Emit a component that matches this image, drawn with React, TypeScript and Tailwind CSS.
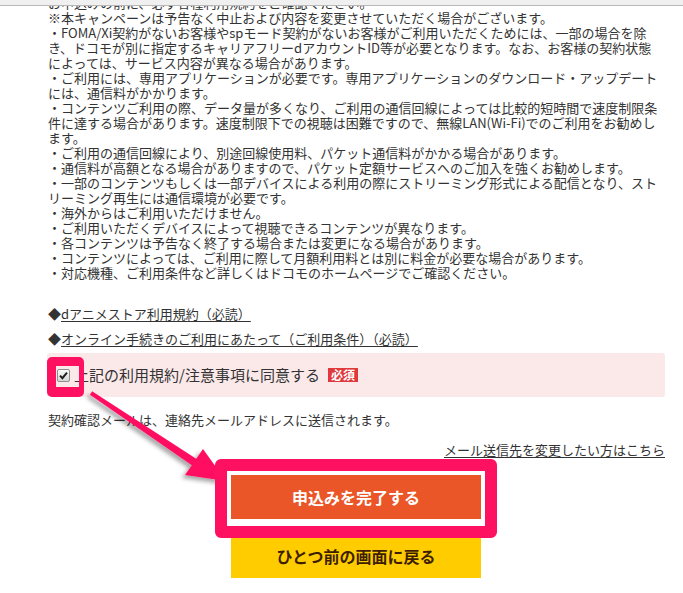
const NOTES = [
  "お申込みの前に、必ず各種利用規約をご確認ください。",
  "※本キャンペーンは予告なく中止および内容を変更させていただく場合がございます。",
  "・FOMA/Xi契約がないお客様やspモード契約がないお客様がご利用いただくためには、一部の場合を除",
  "き、ドコモが別に指定するキャリアフリーdアカウントID等が必要となります。なお、お客様の契約状態",
  "によっては、サービス内容が異なる場合があります。",
  "・ご利用には、専用アプリケーションが必要です。専用アプリケーションのダウンロード・アップデート",
  "には、通信料がかかります。",
  "・コンテンツご利用の際、データ量が多くなり、ご利用の通信回線によっては比較的短時間で速度制限条",
  "件に達する場合があります。速度制限下での視聴は困難ですので、無線LAN(Wi-Fi)でのご利用をお勧めし",
  "ます。",
  "・ご利用の通信回線により、別途回線使用料、パケット通信料がかかる場合があります。",
  "・通信料が高額となる場合がありますので、パケット定額サービスへのご加入を強くお勧めします。",
  "・一部のコンテンツもしくは一部デバイスによる利用の際にストリーミング形式による配信となり、スト",
  "リーミング再生には通信環境が必要です。",
  "・海外からはご利用いただけません。",
  "・ご利用いただくデバイスによって視聴できるコンテンツが異なります。",
  "・各コンテンツは予告なく終了する場合または変更になる場合があります。",
  "・コンテンツによっては、ご利用に際して月額利用料とは別に料金が必要な場合があります。",
  "・対応機種、ご利用条件など詳しくはドコモのホームページでご確認ください。",
];

const TERMS = [
  "dアニメストア利用規約（必読）",
  "オンライン手続きのご利用にあたって（ご利用条件）（必読）",
];

function Checked() {
  return (
    <span className="flex h-[13px] w-[13px] items-center justify-center rounded-[2px] border border-[#8e8e8e] bg-gradient-to-b from-[#fafafa] to-[#d6d6d6]">
      <svg width="9" height="9" viewBox="0 0 9 9">
        <path d="M1 4.6 L3.4 7.2 L8 1.6" fill="none" stroke="#1f1f1f" strokeWidth="2" />
      </svg>
    </span>
  );
}

export default function App() {
  return (
    <div
      className="relative min-h-[593px] w-full overflow-hidden bg-white text-[#333]"
      style={{ fontFamily: '"Noto Sans CJK JP", "Noto Sans", sans-serif' }}
    >
      <div className="h-[6px] border-b border-[#b8b8b8] bg-[#f0f0f0]" />

      <div className="overflow-hidden pl-[47px] pr-[18px]">
        <div className="-mt-[11px] pl-[1px] text-[13px] leading-[15px]">
          {NOTES.map((line) => (
            <div key={line} className="whitespace-nowrap">
              {line}
            </div>
          ))}
        </div>

        <div className="mt-[21px] pl-[1px] text-[13px] leading-[25px]">
          {TERMS.map((t) => (
            <div key={t} className="whitespace-nowrap">
              ◆<span className="underline underline-offset-2">{t}</span>
            </div>
          ))}
        </div>

        <div className="mt-[2px] flex h-[44px] items-center rounded-[3px] bg-[#fbe9ea] pl-[10px]">
          <Checked />
          <span className="ml-[4px] text-[15px] leading-[20px]">上記の利用規約/注意事項に同意する</span>
          <span className="ml-[8px] bg-[#e0393b] px-[3px] text-[12px] leading-[14px] font-bold text-white">
            必須
          </span>
        </div>

        <p className="mt-[13px] pl-[1px] text-[13px] leading-[20px]">
          契約確認メールは、連絡先メールアドレスに送信されます。
        </p>

        <p className="mt-[10px] text-right text-[13px] leading-[20px]">
          <span className="underline underline-offset-2">メール送信先を変更したい方はこちら</span>
        </p>

        <div className="mx-auto mt-[15px] flex h-[44px] w-[250px] items-center justify-center bg-[#ea5628] text-[16px] font-bold text-white">
          申込みを完了する
        </div>
        <div className="mx-auto mt-[14px] flex h-[45px] w-[250px] items-center justify-center bg-[#ffcc00] text-[16px] font-bold text-[#3d1e00]">
          ひとつ前の画面に戻る
        </div>
      </div>

      {/* annotation overlay */}
      <svg className="pointer-events-none absolute left-0 top-0" width="683" height="593">
        <defs>
          <filter id="sh" x="-20%" y="-20%" width="140%" height="140%">
            <feDropShadow dx="-3" dy="3" stdDeviation="2" floodColor="#000" floodOpacity="0.35" />
          </filter>
        </defs>
        <polygon
          points="89.9,394.7 191.8,465.3 185,475 226,481 203,449 196.2,458.7 92.1,391.3"
          fill="#ff1161"
          filter="url(#sh)"
        />
      </svg>
      <div className="absolute left-[47px] top-[357px] h-[40px] w-[37px] rounded-[5px] border-b-[10px] border-l-[9px] border-r-[5px] border-t-[9px] border-[#ff1161]" />
      <div className="absolute left-[215px] top-[459px] h-[79px] w-[282px] rounded-[6px] border-[12px] border-[#ff1161]" />
    </div>
  );
}
